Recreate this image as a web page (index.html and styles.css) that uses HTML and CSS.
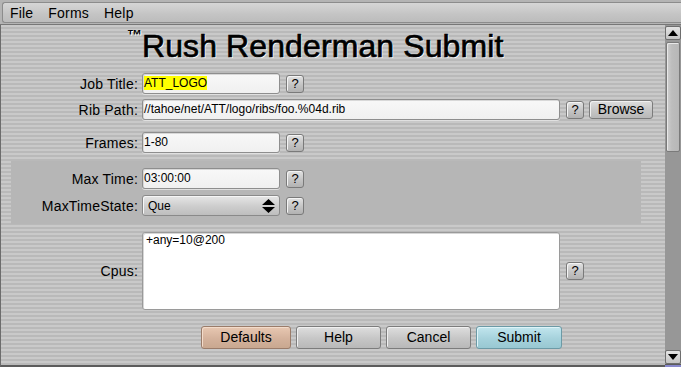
FILE: index.html
```html
<!DOCTYPE html>
<html>
<head>
<meta charset="utf-8">
<link rel="stylesheet" href="styles.css">
</head>
<body>
<div class="menubar">
  <div class="menubar-inner">
    <span class="menu-item">File</span>
    <span class="menu-item">Forms</span>
    <span class="menu-item">Help</span>
  </div>
</div>
<div class="main">
  <div class="content">
    <div class="title"><span class="tm">™</span>Rush Renderman Submit</div>

    <div class="row row-job">
      <div class="lbl">Job Title:</div>
      <div class="field short"><span class="hl">ATT_LOGO</span></div>
      <div class="qbtn">?</div>
    </div>

    <div class="row row-rib">
      <div class="lbl">Rib Path:</div>
      <div class="field long">//tahoe/net/ATT/logo/ribs/foo.%04d.rib</div>
      <div class="qbtn">?</div>
      <div class="btn browse">Browse</div>
    </div>

    <div class="row row-frames">
      <div class="lbl">Frames:</div>
      <div class="field short">1-80</div>
      <div class="qbtn">?</div>
    </div>

    <div class="panel">
      <div class="row">
        <div class="lbl lbl-panel">Max Time:</div>
        <div class="field short">03:00:00</div>
        <div class="qbtn">?</div>
      </div>
      <div class="row">
        <div class="lbl lbl-panel">MaxTimeState:</div>
        <div class="select">
          <span>Que</span>
          <svg class="updown" width="13" height="14" viewBox="0 0 13 14"><path d="M6.5 0 L13 6 L0 6 Z M0 8 L13 8 L6.5 14 Z" fill="#000"/></svg>
        </div>
        <div class="qbtn">?</div>
      </div>
    </div>

    <div class="row row-cpus">
      <div class="lbl">Cpus:</div>
      <div class="textarea">+any=10@200</div>
      <div class="qbtn">?</div>
    </div>

    <div class="actions">
      <div class="btn act defaults">Defaults</div>
      <div class="btn act help">Help</div>
      <div class="btn act cancel">Cancel</div>
      <div class="btn act submit">Submit</div>
    </div>
  </div>
  <div class="scrollbar">
    <div class="sb-btn"><svg width="10" height="6" viewBox="0 0 10 6"><path d="M5 0 L10 6 L0 6 Z" fill="#000"/></svg></div>
    <div class="sb-thumb"></div>
    <div class="sb-track"></div>
    <div class="sb-btn"><svg width="10" height="6" viewBox="0 0 10 6"><path d="M0 0 L10 0 L5 6 Z" fill="#000"/></svg></div>
    <div class="sb-end"></div>
  </div>
</div>
</body>
</html>
```

FILE: styles.css
```css
* { box-sizing: border-box; }
html, body {
  margin: 0;
  padding: 0;
  width: 681px;
  height: 367px;
  overflow: hidden;
  font-family: "Liberation Sans", Arial, sans-serif;
  color: #000;
  background: #c2c2c2;
}
.menubar {
  height: 25px;
  padding: 2px 0 1px 2px;
  background: #b4b4b4;
  border-bottom: 1px solid #777;
}
.menubar-inner {
  height: 21px;
  border: 1px solid #8c8c8c;
  border-right: none;
  border-radius: 3px 0 0 3px;
  background: linear-gradient(#d6d6d6, #c4c4c4 60%, #bcbcbc);
  display: flex;
  align-items: center;
  padding-left: 7px;
  padding-top: 1px;
  gap: 15px;
  font-size: 14px;
  line-height: 16px;
  letter-spacing: 0.2px;
}
.main {
  display: flex;
  height: 342px;
}
.content {
  width: 665px;
  height: 342px;
  border-left: 1px solid #6c6c6c;
  border-bottom: 2px solid #5c5c5c;
  background: repeating-linear-gradient(to bottom, #c9c9c9 0px, #c9c9c9 2px, #b9b9b9 2px, #b9b9b9 4px);
}
.title {
  margin-top: 5px;
  padding-left: 126px;
  height: 32px;
  font-size: 32px;
  line-height: 32px;
  letter-spacing: 0.1px;
  -webkit-text-stroke: 0.7px #000;
  text-shadow: 1px 1px 0 #fff;
  white-space: nowrap;
}
.tm {
  font-size: 15px;
  font-weight: bold;
  vertical-align: top;
  line-height: 15px;
  position: relative;
  top: -3px;
  margin-right: 0;
  letter-spacing: 0;
  -webkit-text-stroke: 0;
}
.row {
  display: flex;
  align-items: center;
  height: 21px;
}
.row-job { margin-top: 11px; }
.row-rib { margin-top: 5px; }
.row-frames { margin-top: 12px; }
.lbl {
  width: 141px;
  padding-right: 4px;
  text-align: right;
  font-size: 14px;
  line-height: 16px;
  letter-spacing: 0.2px;
  white-space: nowrap;
}
.lbl-panel { width: 131px; }
.field {
  height: 21px;
  border: 1px solid #8e8e8e;
  border-radius: 3px;
  background: linear-gradient(#f8f8f8, #f0f0f0);
  box-shadow: inset 1px 1px 0 #d8d8d8, 0 1px 0 #e0e0e0;
  font-size: 12px;
  line-height: 15px;
  padding: 2px 1px;
  white-space: nowrap;
  overflow: hidden;
}
.short { width: 138px; }
.long { width: 418px; }
.hl { background: #ffff00; }
.qbtn {
  width: 18px;
  height: 18px;
  margin-left: 6px;
  border: 1px solid #7a7a7a;
  border-radius: 3px;
  background: linear-gradient(#e2e2e2, #c4c4c4 55%, #b2b2b2);
  box-shadow: inset 1px 1px 0 #f4f4f4;
  font-size: 13px;
  line-height: 16px;
  text-align: center;
}
.btn {
  border: 1px solid #7c7c7c;
  border-radius: 3px;
  background: linear-gradient(#dedede, #c6c6c6 55%, #b8b8b8);
  box-shadow: inset 1px 1px 0 #f0f0f0;
  font-size: 14px;
  text-align: center;
}
.browse {
  width: 64px;
  height: 19px;
  margin-left: 5px;
  line-height: 17px;
}
.panel {
  margin: 8px 0 0 10px;
  width: 630px;
  height: 63px;
  background: #b6b6b6;
  padding-top: 7px;
  display: flex;
  flex-direction: column;
  gap: 6px;
}
.select {
  width: 138px;
  height: 21px;
  border: 1px solid #8a8a8a;
  border-radius: 3px;
  background: linear-gradient(#e6e6e6, #cdcdcd 55%, #bebebe);
  box-shadow: inset 1px 1px 0 #f6f6f6;
  display: flex;
  align-items: center;
  justify-content: space-between;
  padding: 0 4px 0 5px;
  font-size: 12px;
}
.updown { display: block; }
.row-cpus {
  margin-top: 8px;
  height: 78px;
}
.textarea {
  width: 418px;
  height: 78px;
  align-self: flex-start;
  background: #fff;
  border: 1px solid #9a9a9a;
  border-radius: 3px;
  box-shadow: inset 1px 1px 0 #d6d6d6;
  font-size: 12px;
  line-height: 14px;
  padding: 0 3px;
}
.actions {
  display: flex;
  gap: 5px;
  margin-top: 16px;
  padding-left: 200px;
}
.act {
  height: 23px;
  line-height: 21px;
  width: 85px;
}
.defaults {
  width: 90px;
  background: linear-gradient(#e8c8b2, #d4b29c 55%, #c9a890);
  border-color: #9a7c6a;
  box-shadow: inset 1px 1px 0 #f3dccb;
}
.submit {
  width: 86px;
  background: linear-gradient(#c2e6ee, #a6d2dc 55%, #98c8d2);
  border-color: #6c9aa6;
  box-shadow: inset 1px 1px 0 #dff4f8;
}
.scrollbar {
  width: 16px;
  height: 342px;
  background: #979797;
  display: flex;
  flex-direction: column;
  padding-top: 1px;
}
.sb-btn {
  height: 14px;
  width: 16px;
  border: 1px solid #6e6e6e;
  border-radius: 2px;
  background: linear-gradient(#e4e4e4, #c4c4c4);
  display: flex;
  align-items: center;
  justify-content: center;
}
.sb-thumb {
  margin: 2px 1px 0 1px;
  height: 110px;
  border: 1px solid #7a7a7a;
  border-radius: 2px;
  background: linear-gradient(to right, #cfcfcf, #bdbdbd 40%, #b7b7b7);
  box-shadow: inset 1px 1px 0 #e8e8e8;
}
.sb-track { flex: 1; }
.sb-end {
  height: 3px;
  border-top: 1px solid #5c5c5c;
  background: #8888cc;
}
```
